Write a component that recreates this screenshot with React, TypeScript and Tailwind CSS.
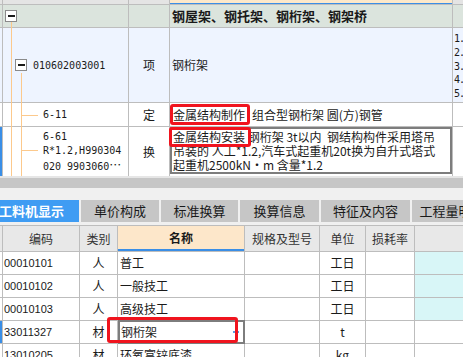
const F = "font-['Noto_Sans_CJK_SC','Noto_Sans',sans-serif]";
const M = "font-['DejaVu_Sans_Mono','Liberation_Mono',monospace]";
const line = 'border-[#bdbdbd]';

function MinusBox() {
  return (
    <span className="flex h-[12px] w-[12px] shrink-0 items-center justify-center border border-[#8a8a8a] bg-white">
      <span className="h-[2px] w-[7px] bg-[#1a1a1a]" />
    </span>
  );
}

function TopGrid() {
  return (
    <div className={`relative ${F} text-[12px] text-[#1a1a1a]`}>
      {/* column header strip */}
      <div className={`flex h-[5px] border-b ${line}`}>
        <div className={`w-[3px] border-r ${line} bg-[#e4e4e4]`} />
        <div className={`w-[126px] border-r ${line} bg-[#e4e4e4]`} />
        <div className={`w-[41px] border-r ${line} bg-[#e4e4e4]`} />
        <div className={`flex w-[283px] flex-col border-r ${line}`}>
          <div className="h-[3px] bg-[#fce8ca]" />
          <div className="h-[1px] bg-[#3a8ee6]" />
        </div>
        <div className="flex-1 bg-[#e4e4e4]" />
      </div>

      {/* section header */}
      <div className={`flex h-[23px] border-b ${line} bg-[#dbe4dd]`}>
        <div className={`w-[3px] border-r ${line}`} />
        <div className={`flex w-[126px] items-center border-r ${line} pl-[2px]`}>
          <MinusBox />
        </div>
        <div className={`w-[41px] border-r ${line}`} />
        <div className={`flex w-[283px] items-center border-r ${line} pl-[2px] text-[13px] font-bold`}>
          钢屋架、钢托架、钢桁架、钢架桥
        </div>
        <div className="flex-1" />
      </div>

      {/* item row */}
      <div className={`flex h-[75px] border-b ${line} bg-[#eef4ff]`}>
        <div className={`w-[3px] border-r ${line}`} />
        <div className={`flex w-[126px] items-center gap-[6px] border-r ${line} pl-[12px]`}>
          <MinusBox />
          <span className={`${M} text-[10px]`}>010602003001</span>
        </div>
        <div className={`flex w-[41px] items-center justify-center border-r ${line}`}>项</div>
        <div className={`flex w-[283px] items-center border-r ${line} pl-[2px]`}>钢桁架</div>
        <div className={`flex-1 overflow-hidden pl-[1px] pt-[4px] ${M} text-[10px] leading-[13.8px] tracking-[-1px]`}>
          <div>1.</div>
          <div>2.</div>
          <div>3.</div>
          <div>4.</div>
          <div>5.</div>
        </div>
      </div>

      {/* 6-11 */}
      <div className={`flex h-[24px] border-b ${line} bg-white`}>
        <div className={`w-[3px] border-r ${line}`} />
        <div className={`flex w-[126px] items-center border-r ${line} pl-[40px] ${M} text-[10px]`}>6-11</div>
        <div className={`flex w-[41px] items-center justify-center border-r ${line}`}>定</div>
        <div className={`flex w-[283px] items-center whitespace-nowrap border-r ${line}`}>
          <span className="flex h-[21px] items-center rounded-[3px] border-[3px] border-[#f0141e] pl-[0px] pr-[2px]">金属结构制作</span>
          <span className="pl-[2px]">组合型钢桁架 圆(方)钢管</span>
        </div>
        <div className="flex-1" />
      </div>

      {/* 6-61 */}
      <div className="flex h-[49px] bg-white">
        <div className={`w-[3px] border-r ${line} bg-[#3a8ee6]`} />
        <div className={`w-[126px] border-r ${line} pl-[40px] pt-[3px] ${M} text-[10px] leading-[14px]`}>
          <div>6-61</div>
          <div>R*1.2,H990304</div>
          <div>
            020 9903060<span className={`${F} text-[12px]`}>…</span>
          </div>
        </div>
        <div className={`flex w-[41px] items-center justify-center border-r ${line}`}>换</div>
        <div className={`relative w-[283px] border-r ${line}`}>
          <div className="h-[47px] overflow-hidden whitespace-pre border-2 border-[#7d7d7d] pl-[1px] pt-[1px] leading-[14px]">
            <div>金属结构安装 钢桁架 3t以内  钢结构构件采用塔吊</div>
            <div>吊装的 人工*1.2,汽车式起重机20t换为自升式塔式</div>
            <div>起重机2500kN·m 含量*1.2</div>
          </div>
          <div className="absolute left-[-1px] top-0 h-[20px] w-[82px] rounded-[3px] border-[3px] border-[#f0141e]" />
        </div>
        <div className="flex-1" />
      </div>

      {/* tree lines */}
      <svg className="pointer-events-none absolute left-0 top-0" width="40" height="176">
        <line x1="11.5" y1="22" x2="11.5" y2="176" stroke="#fcc98c" />
        <line x1="21.5" y1="73" x2="21.5" y2="176" stroke="#fcc98c" />
        <line x1="22" y1="115.5" x2="38" y2="115.5" stroke="#fcc98c" />
        <line x1="22" y1="150.5" x2="38" y2="150.5" stroke="#fcc98c" />
      </svg>
    </div>
  );
}

function Tabs() {
  const tabs = [
    { name: '单价构成', w: 'w-[78px]' },
    { name: '标准换算', w: 'w-[77px]' },
    { name: '换算信息', w: 'w-[79px]' },
    { name: '特征及内容', w: 'w-[89px]' },
    { name: '工程量明细', w: 'w-[80px]' },
  ];
  return (
    <div className={`${F} bg-[#f0f0f0]`}>
      <div className="h-[2px] bg-[#e6e6e6]" />
      <div className="h-[10px] bg-[#c6c6c6]" />
      <div className="flex h-[34px] gap-[2px] overflow-hidden pt-[12px]">
        <div className="flex w-[79px] shrink-0 items-center overflow-hidden whitespace-nowrap bg-[#3f9cf3] text-[13px] font-bold text-white">
          <span className="-ml-[1px]">工料机显示</span>
        </div>
        {tabs.map((t) => (
          <div
            key={t.name}
            className={`${t.w} flex shrink-0 items-center justify-center overflow-hidden whitespace-nowrap bg-[#c6c6c6] text-[13px] text-[#1a1a1a]`}
          >
            {t.name}
          </div>
        ))}
      </div>
    </div>
  );
}

const cols = ['w-[3px]', 'w-[77px]', 'w-[38px]', 'w-[127px]', 'w-[75px]', 'w-[46px]', 'w-[49px]', 'flex-1'];

const rows = [
  { code: '00010101', type: '人', name: '普工', unit: '工日', cyan: true },
  { code: '00010102', type: '人', name: '一般技工', unit: '工日', cyan: true },
  { code: '00010103', type: '人', name: '高级技工', unit: '工日', cyan: true },
  { code: '33011327', type: '材', name: '钢桁架', unit: 't', cyan: false, active: true },
  { code: '13010205', type: '材', name: '环氧富锌底漆', unit: 'kg', cyan: false },
];

function BottomGrid() {
  return (
    <div className={`relative ${F} text-[12px] text-[#1a1a1a]`}>
      <div className="h-[3px] bg-[#f0f0f0]" />
      <div className={`flex h-[27px] border-b border-t ${line} bg-[#e8e8e8] text-[#333]`}>
        <div className={`${cols[0]} border-r ${line}`} />
        <div className={`${cols[1]} flex items-center justify-center border-r ${line}`}>编码</div>
        <div className={`${cols[2]} flex items-center justify-center border-r ${line}`}>类别</div>
        <div className={`${cols[3]} flex flex-col border-r ${line} bg-[#fde7ca]`}>
          <div className="flex flex-1 items-center justify-center font-bold text-[#1a1a1a]">名称</div>
          <div className="h-[2px] bg-[#3a8ee6]" />
        </div>
        <div className={`${cols[4]} flex items-center justify-center border-r ${line}`}>规格及型号</div>
        <div className={`${cols[5]} flex items-center justify-center border-r ${line}`}>单位</div>
        <div className={`${cols[6]} flex items-center justify-center border-r ${line}`}>损耗率</div>
        <div className="flex-1" />
      </div>
      {rows.map((r) => (
        <div key={r.code} className={`flex h-[23px] border-b ${line} bg-white`}>
          <div className={`${cols[0]} border-r ${line} ${r.active ? 'bg-[#3a8ee6]' : ''}`} />
          <div className={`${cols[1]} flex items-center border-r ${line} pl-[1px] font-['Liberation_Sans',sans-serif] text-[11px]`}>
            {r.code}
          </div>
          <div className={`${cols[2]} flex items-center justify-center border-r ${line}`}>{r.type}</div>
          {r.active ? (
            <div className={`${cols[3]} -my-[1px] flex items-center justify-between border-2 border-[#7d7d7d] pl-[1px] pr-[4px]`}>
              <span>{r.name}</span>
              <span className="flex gap-[2px]">
                <span className="h-[2px] w-[2px] bg-[#5b9fe0]" />
                <span className="h-[2px] w-[2px] bg-[#5b9fe0]" />
              </span>
            </div>
          ) : (
            <div className={`${cols[3]} flex items-center border-r ${line} pl-[2px]`}>{r.name}</div>
          )}
          <div className={`${cols[4]} border-r ${line}`} />
          <div className={`${cols[5]} flex items-center justify-center border-r ${line}`}>{r.unit}</div>
          <div className={`${cols[6]} border-r ${line}`} />
          <div className={`flex-1 ${r.cyan ? 'bg-[#d8f6f7]' : ''}`} />
        </div>
      ))}
      <div className="absolute left-[107px] top-[95px] h-[26px] w-[131px] rounded-[3px] border-[3px] border-[#f0141e]" />
    </div>
  );
}

export default function App() {
  return (
    <div className="h-[357px] w-[463px] overflow-hidden bg-white">
      <TopGrid />
      <Tabs />
      <BottomGrid />
    </div>
  );
}
